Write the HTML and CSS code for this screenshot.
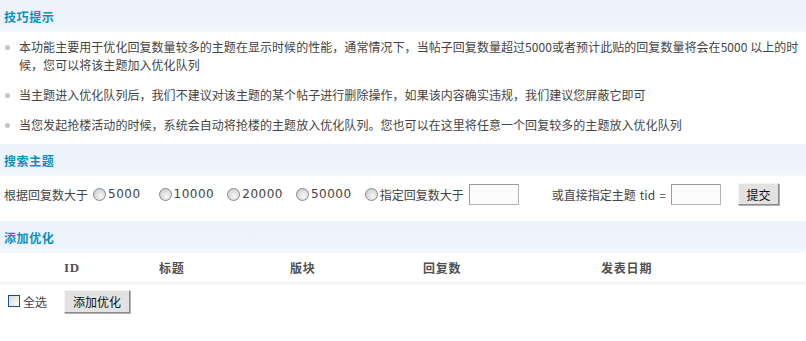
FILE: index.html
```html
<!DOCTYPE html>
<html lang="zh-CN">
<head>
<meta charset="utf-8">
<title>优化队列</title>
<link rel="stylesheet" href="styles.css">
</head>
<body>
<div class="page">
  <div class="sec-head">技巧提示</div>
  <ul class="tips">
    <li>本功能主要用于优化回复数量较多的主题在显示时候的性能，通常情况下，当帖子回复数量超过5000或者预计此贴的回复数量将会在5000 以上的时候，您可以将该主题加入优化队列</li>
    <li>当主题进入优化队列后，我们不建议对该主题的某个帖子进行删除操作，如果该内容确实违规，我们建议您屏蔽它即可</li>
    <li>当您发起抢楼活动的时候，系统会自动将抢楼的主题放入优化队列。您也可以在这里将任意一个回复较多的主题放入优化队列</li>
  </ul>

  <div class="sec-head">搜索主题</div>
  <form class="search-row">
    <span class="lbl">根据回复数大于</span>
    <label class="opt opt-first"><input type="radio" name="r" class="radio"><span class="num">5000</span></label>
    <label class="opt"><input type="radio" name="r" class="radio"><span class="num">10000</span></label>
    <label class="opt"><input type="radio" name="r" class="radio"><span class="num">20000</span></label>
    <label class="opt"><input type="radio" name="r" class="radio"><span class="num">50000</span></label>
    <label class="opt opt-last"><input type="radio" name="r" class="radio"><span>指定回复数大于</span></label>
    <input type="text" class="txt">
    <span class="lbl lbl-tid">或直接指定主题 tid =</span>
    <input type="text" class="txt">
    <button type="button" class="btn btn-submit">提交</button>
  </form>

  <div class="sec-head">添加优化</div>
  <div class="grid grid-head">
    <div></div>
    <div class="th th-id">ID</div>
    <div class="th">标题</div>
    <div class="th">版块</div>
    <div class="th">回复数</div>
    <div class="th">发表日期</div>
  </div>
  <div class="foot-row">
    <label class="chk-wrap"><input type="checkbox" class="chk"><span>全选</span></label>
    <button type="button" class="btn btn-add">添加优化</button>
  </div>
</div>
</body>
</html>
```

FILE: styles.css
```css
html, body {
  margin: 0;
  padding: 0;
  background: #ffffff;
}

body {
  font-family: "DejaVu Sans", "Noto Sans CJK SC", sans-serif;
  font-size: 12px;
  color: #444;
  width: 806px;
  height: 341px;
  overflow: hidden;
}

.page {
  display: flex;
  flex-direction: column;
}

.sec-head {
  height: 32px;
  display: flex;
  align-items: center;
  padding-left: 4px;
  background: linear-gradient(to bottom, #edf3fa 0%, #eef4fb 80%, #f5f9fd 100%);
  color: #0a8fbf;
  font-weight: bold;
  font-family: "Noto Sans CJK SC", sans-serif;
  letter-spacing: 0.6px;
}

.tips {
  list-style: none;
  margin: 0;
  padding: 0 0 4px 0;
}

.tips li {
  position: relative;
  padding: 6px 4px 6px 19px;
  line-height: 18px;
  font-family: "Noto Sans CJK SC", sans-serif;
  letter-spacing: 0.05px;
}

.tips li::before {
  content: "";
  position: absolute;
  left: 5px;
  top: 13px;
  width: 5px;
  height: 5px;
  border-radius: 50%;
  background: #c4c4c4;
}

.search-row {
  margin: 0 0 9px 0;
  height: 36px;
  padding: 0 4px;
  display: flex;
  align-items: center;
}

.lbl {
  font-family: "Noto Sans CJK SC", sans-serif;
  white-space: nowrap;
}

.opt {
  display: inline-flex;
  align-items: center;
  white-space: nowrap;
  margin-right: 13px;
}

.opt span {
  margin-left: 2px;
}

.num {
  letter-spacing: 0.5px;
}

.opt-first {
  margin-left: 5px;
  margin-right: 18px;
}

.opt-last {
  margin-right: 5px;
}

.opt-last span {
  font-family: "Noto Sans CJK SC", sans-serif;
}

.radio {
  -webkit-appearance: none;
  appearance: none;
  margin: 0;
  width: 13px;
  height: 13px;
  border-radius: 50%;
  border: 1px solid #7f8a94;
  background: radial-gradient(circle at 60% 65%, #f6f6f6 0%, #dcdcdc 55%, #b9bec3 100%);
  box-sizing: border-box;
}

.txt {
  width: 50px;
  height: 21px;
  box-sizing: border-box;
  margin: 0;
  border: 1px solid #b4b4b4;
  border-top-color: #9a9a9a;
  border-left-color: #9a9a9a;
  background: #fbfbfb;
  padding: 0;
}

.lbl-tid {
  margin-left: 33px;
  margin-right: 5px;
  word-spacing: 1.5px;
}

.btn {
  font-family: "Noto Sans CJK SC", sans-serif;
  font-size: 12px;
  color: #111;
  background: #e2e2e2;
  border: 1px solid;
  border-color: #f4f4f4 #8c8c8c #8c8c8c #f4f4f4;
  box-shadow: 1px 1px 0 #b0b0b0;
  margin: 0;
  padding: 0;
  height: 22px;
  box-sizing: border-box;
}

.btn-submit {
  margin-left: 17px;
  width: 41px;
}

.grid {
  display: grid;
  grid-template-columns: 64px 95px 131px 133px 178px 1fr;
}

.grid-head {
  height: 29px;
  align-items: center;
  border-bottom: 1px solid #ececec;
  box-shadow: 0 2px 0 #f8f8f8;
}

.th {
  font-weight: bold;
  color: #505050;
  font-family: "Noto Sans CJK SC", sans-serif;
  letter-spacing: 0.8px;
}

.th-id {
  font-family: "Liberation Serif", "Noto Sans CJK SC", serif;
  font-size: 13px;
}

.foot-row {
  display: flex;
  align-items: center;
  height: 36px;
  padding-left: 8px;
}

.chk-wrap {
  display: inline-flex;
  align-items: center;
  width: 56px;
  font-family: "Noto Sans CJK SC", sans-serif;
}

.chk {
  -webkit-appearance: none;
  appearance: none;
  margin: 0 3px 0 0;
  width: 12px;
  height: 12px;
  box-sizing: border-box;
  border: 1px solid #1c5180;
  background: linear-gradient(135deg, #dcdcd5 0%, #f2f2ee 70%, #ffffff 100%);
}

.btn-add {
  width: 66px;
  height: 23px;
}
```
